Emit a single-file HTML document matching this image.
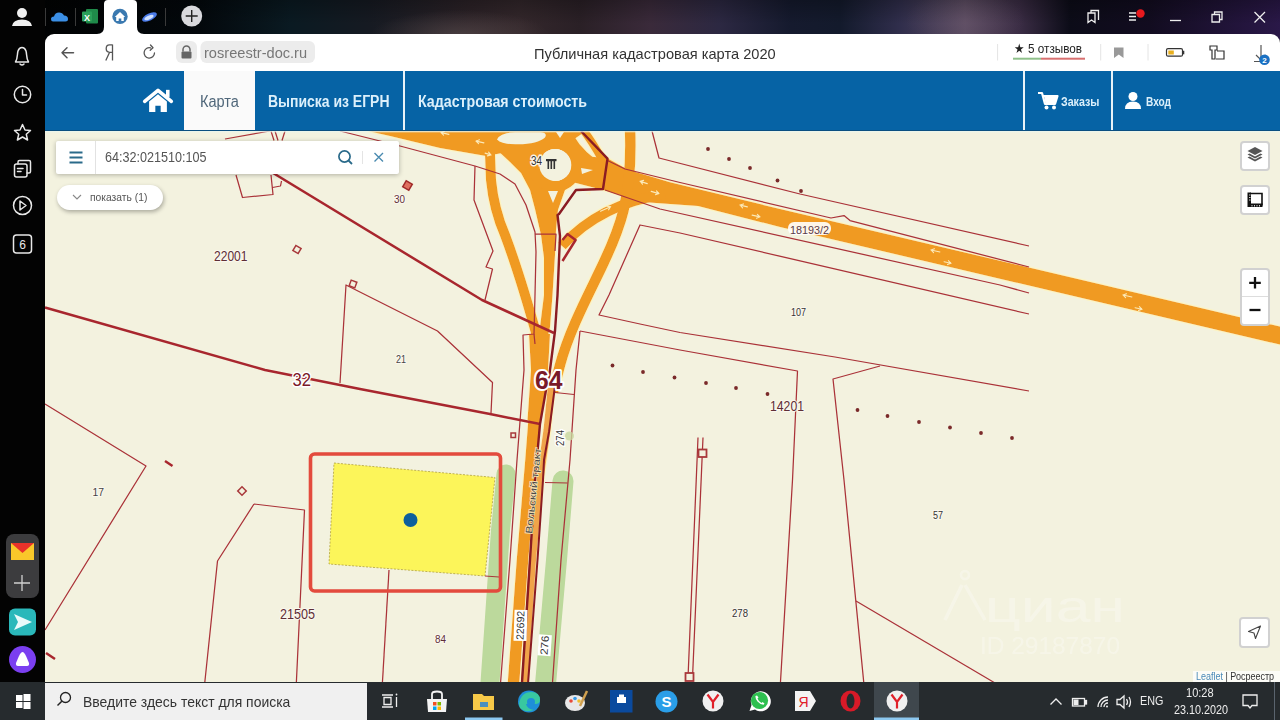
<!DOCTYPE html>
<html><head><meta charset="utf-8">
<style>
*{margin:0;padding:0;box-sizing:border-box}
html,body{width:1280px;height:720px;overflow:hidden;background:#000;font-family:"Liberation Sans",sans-serif}
.abs{position:absolute}
#top{left:0;top:0;width:1280px;height:40px;background:radial-gradient(ellipse 90px 26px at 460px 36px,rgba(110,95,95,0.45),rgba(0,0,0,0)),radial-gradient(ellipse 60px 30px at 965px 20px,rgba(120,100,120,0.25),rgba(0,0,0,0)),linear-gradient(180deg,rgba(0,0,0,0.25),rgba(0,0,0,0) 60%),linear-gradient(90deg,#000 0px,#03080c 200px,#0a1a22 290px,#161a22 370px,#2c2227 470px,#33272b 520px,#2a2026 580px,#3a2a3a 650px,#2c2842 720px,#151a2e 790px,#131a2c 840px,#302e4c 900px,#5a4a60 965px,#3a2c44 1020px,#0c0c18 1070px,#120c20 1150px,#2a1848 1280px)}
#side{left:0;top:0;width:45px;height:684px;background:#030303}
#toolbar{left:45px;top:34px;width:1235px;height:37px;background:#fff;border-radius:9px 9px 0 0}
#nav{left:45px;top:71px;width:1235px;height:60px;background:#0663a5}
#map{left:45px;top:131px;width:1235px;height:552px;background:#f3f2df;overflow:hidden}
#task{left:0;top:682px;width:1280px;height:38px;background:#262b2e}
.navt{position:absolute;top:0;height:60px;line-height:62px;color:#dcf0fb;font-size:17px;font-weight:bold;white-space:nowrap;transform-origin:0 50%}
</style></head>
<body>
<div id="top" class="abs"></div>
<div id="side" class="abs"></div>
<div id="toolbar" class="abs"></div>
<div id="nav" class="abs"></div>
<div id="map" class="abs"><svg class="abs" style="left:0;top:0" width="1235" height="552" viewBox="45 131 1235 552">
<defs>
<filter id="blur1" x="-5%" y="-5%" width="110%" height="110%"><feGaussianBlur stdDeviation="0.35"/></filter>
</defs>
<g filter="url(#blur1)">
<!-- green bands -->
<g stroke="#bcd99c" stroke-linecap="round" fill="none">
<path d="M506,474 L500.5,530 L489.5,690" stroke-width="19"/>
<path d="M563,481 L556.5,560 L545,690" stroke-width="21"/>
</g>
<!-- roads -->
<filter id="halo" x="-2%" y="-2%" width="104%" height="104%"><feMorphology in="SourceAlpha" operator="dilate" radius="1.3" result="d"/><feFlood flood-color="#fcf4c0"/><feComposite in2="d" operator="in" result="h"/><feMerge><feMergeNode in="h"/><feMergeNode in="SourceGraphic"/></feMerge></filter>
<g filter="url(#halo)">
<g fill="#f09a22">
<path d="M350,100 L600,100 L586,131 L570,142 L541,146 L497,154 L486,156 L440,148 L390,136 L350,127 Z"/>
<path d="M570,155 L607,158 L628,169.7 L670,182.3 L780,209 L1290,329 L1290,347 L780,227 L698,206 L663,203.4 L642,202 L607,191 L572,182 Z"/>
<path d="M529,334 L550,334 L547.5,380 L540,420 L527.5,420 L531,370 Z"/>
<path d="M497,150 L541,146 L555,187 L565,190 L558,210 L556,230 L555,255 L552.5,295 L550,327 L546,345 L536,345 L540,327 L544,295 L544,258 L541,235 L535,209 L530,190 L521,173 L510,162 Z"/>
</g>
<g stroke="#f09a22" fill="none" stroke-linecap="butt">
<circle cx="555" cy="165" r="21.5" stroke-width="11"/>
<path d="M581,127 Q592,141 603,161" stroke-width="8"/>
<path d="M565,127 Q570,146 592,163" stroke-width="10"/>
<path d="M489,128 L491,180 Q494,210 505,235 Q520,275 538,340" stroke-width="10"/>
<path d="M630,128 C633,200 618,232 604,262 C590,292 570,328 560,365 L553,392" stroke-width="10.5"/>
<path d="M562,246 Q600,204 665,194" stroke-width="10"/>
<path d="M540,330 L538,370 L531,460 L522.5,560 L513,690" stroke-width="11.5"/>
<path d="M552,380 L547,430 L540,480 L532.5,560 L524,690" stroke-width="7" stroke="#f0a448"/>
</g>
</g>
<g stroke="#fbe9b8" stroke-width="1.1" fill="none" stroke-linecap="round">
<path d="M640.2,181.4 L647.3,183.6 M642.5,184.2 L640.2,181.4 L643.6,180.4"/>
<path d="M651.2,191.4 L658.8,193.6 M656.5,190.9 L658.8,193.6 L655.4,194.7"/>
<path d="M740.1,205.1 L747.4,206.9 M742.6,207.8 L740.1,205.1 L743.5,203.9"/>
<path d="M752.1,215.1 L759.9,216.9 M757.4,214.3 L759.9,216.9 L756.5,218.2"/>
<path d="M931.1,250.0 L939.9,252.0 M933.6,252.6 L931.1,250.0 L934.5,248.7"/>
<path d="M944.1,261.7 L950.9,263.3 M948.4,260.7 L950.9,263.3 L947.5,264.6"/>
<path d="M1123.1,295.0 L1131.9,297.0 M1125.6,297.6 L1123.1,295.0 L1126.5,293.7"/>
<path d="M1135.1,307.7 L1141.9,309.3 M1139.4,306.7 L1141.9,309.3 L1138.5,310.6"/>
<path d="M441.1,132.6 L448.9,134.4 M443.6,135.2 L441.1,132.6 L444.5,131.3"/>
<path d="M476.1,141.1 L483.9,142.9 M478.6,143.7 L476.1,141.1 L479.5,139.8"/>
<path d="M485.1,153.1 L490.9,154.9 M488.6,152.1 L490.9,154.9 L487.4,155.9"/>
<path d="M600.5,211.3 L610.5,206.7 M607.0,206.2 L610.5,206.7 L608.6,209.8"/>
</g>
<!-- islands -->
<g fill="#f3f2df">
<circle cx="555.3" cy="165" r="16"/>
<path d="M581,168 L593,170 L582,174 Z"/>
<path d="M548,191 L558,191 L553,203 Z"/>
<path d="M556,132 L564,132 L560,138 Z"/>
<path d="M497,139.5 Q500,132.5 515,132.3 L540,132.3 Q548,132.5 545,137.5 Q538,144 518,144.3 Q502,144.8 497,139.5 Z"/>
</g>
<g fill="#fbf2c4" opacity="0.85">
<path d="M585,193.5 l6,-2 l-1,3 z"/>
</g>
<!-- thin red lines -->
<g stroke="#aa3238" stroke-width="1.25" fill="none" stroke-linejoin="round">
<path d="M225,139 L270,131"/>
<path d="M236,175 L242.5,197.5 L273,194.5 L271,175 M272.5,187.5 L280.5,186 L281.5,181"/>
<path d="M271,131 L274,140.5 M275,131 L278,140.5 M285,131 L282,140.5"/>
<path d="M45,404 L146,466 L45,630"/>
<path d="M254,504 L304.5,510 L296,690 M254,504 L217.5,561 L204,690"/>
<path d="M340,383 L346,285 L437.5,331 L492.5,382.5 L491,413"/>
<path d="M340,131 L400,146 L475,166 L500,174 L515,184 L526,205 L535,232 L536,252 L535,295 L534,334 L523,335 L524,370 L517,460 L510,560 L500,690"/>
<path d="M534,334 L535,344"/>
<path d="M475,166 L474,200 L493,251 L486,267 L492.5,269 L485,300"/>
<path d="M535,234 L556,234 L555,251"/>
<path d="M580,331 L576,370 L570,460 L561,560 L552,690"/>
<path d="M555,392.5 L574,394.5 M545,482.5 L567.5,483"/>
<path d="M580,331 L680,350 L797.5,371 L792.5,480 L780,690"/>
<path d="M1029,314 L680,233 L640,225 L609,295 L599,315 L640,324 L680,332.5 L835,357 L1029,391"/>
<path d="M652,131 L659,158 L800,194 L1029,246"/>
<path d="M607.5,160.5 L625,169 L680,182.5 L831,218 L844,215.6 L850,220.6 L1029,267"/>
<path d="M605,190 L660,209 L1000,285 L1029,293"/>
<path d="M880,366 L833,379 L844,480 L864.5,690"/>
<path d="M856,601 L995,683"/>
<path d="M698,437.5 L688,678 M703,437.5 L692.5,678"/>
<path d="M389,570 L382,690"/>
</g>
<!-- thick red lines -->
<g stroke="#a8282e" stroke-width="2.5" fill="none" stroke-linejoin="round">
<path d="M255,162 L482,300 L554,333"/>
<path d="M45,307.5 L265,370 L360,389 L490,414 L540,424"/>
<path d="M562.5,240 L567.5,234 L575.6,240 L562.5,261"/>
<path d="M165,461 L172.5,466"/>
<path d="M46,653 L55,659"/>
</g>
<g stroke="#8a1a22" stroke-width="2.4" fill="none" stroke-linejoin="round">
<path d="M581,131 L607.5,158.6 L603,189 L576,190 L559,214 L557.5,215 L560,236 L557.5,295 L555,331 L549,377.5 L546,390 L540,424 L535,480 L530,560 L521.5,690"/>
<path d="M555,386 L549,432 L544,460 L543,480 L537.5,560 L527.5,690" stroke-width="2"/>
</g>
<!-- squares / diamonds -->
<g stroke="#a8383a" stroke-width="1.5" fill="none">
<rect x="294" y="246.5" width="6" height="6" transform="rotate(30 297 249.5)"/>
<rect x="239" y="488" width="6" height="6" transform="rotate(45 242 491)"/>
<rect x="350" y="281" width="6" height="6" transform="rotate(20 353 284)"/>
<rect x="511" y="433" width="4.5" height="4.5"/>
<rect x="698.5" y="449.5" width="8" height="7.5" stroke-width="1.8" fill="#f3f2df"/>
<rect x="685.5" y="673" width="8" height="8" stroke-width="1.8" fill="#f3f2df"/>
</g>
<rect x="404" y="182" width="7" height="7" fill="#e07060" stroke="#a02a2a" stroke-width="1.5" transform="rotate(30 407.5 185.5)"/>
<!-- dots -->
<g fill="#7a2a2a">
<circle cx="708" cy="149" r="1.9"/><circle cx="729" cy="159" r="1.9"/><circle cx="750" cy="168" r="1.9"/><circle cx="777.5" cy="180.5" r="1.9"/><circle cx="801" cy="191" r="1.9"/>
<circle cx="612.5" cy="365.5" r="1.9"/><circle cx="643" cy="372" r="1.9"/><circle cx="674.5" cy="377.5" r="1.9"/><circle cx="706" cy="383" r="1.9"/><circle cx="736" cy="388" r="1.9"/><circle cx="767.5" cy="394" r="1.9"/>
<circle cx="857.5" cy="410" r="1.9"/><circle cx="887.5" cy="416" r="1.9"/><circle cx="919" cy="422" r="1.9"/><circle cx="950" cy="427.5" r="1.9"/><circle cx="981" cy="433" r="1.9"/><circle cx="1012" cy="438" r="1.9"/>
</g>
<circle cx="569.5" cy="436" r="4.5" fill="#c8d8a0" opacity="0.8"/>
<!-- selection -->
<path d="M334,463 L495,477.5 L485,576 L329,564 Z" fill="#fcf55a" stroke="#b0a040" stroke-width="0.8" stroke-dasharray="2 1.5"/>
<path d="M485,576 L499,577" stroke="#a8383a" stroke-width="1"/>
<rect x="310.5" y="454" width="190" height="137" rx="4" fill="none" stroke="#e34b3c" stroke-width="3.6"/>
<circle cx="410.5" cy="520" r="7" fill="#0b5e9c"/>
</g>
<g opacity="0.28" fill="#ffffff" font-family="Liberation Sans, sans-serif">
<circle cx="965" cy="575" r="4" fill="none" stroke="#fff" stroke-width="2.5"/>
<path d="M962,585 L945,620 M965,585 L985,620" stroke="#fff" stroke-width="3.5"/>
<text x="985" y="622" font-size="44" textLength="140" lengthAdjust="spacingAndGlyphs">циан</text>
<text x="980" y="654" font-size="24" textLength="140" lengthAdjust="spacingAndGlyphs">ID 29187870</text>
</g>
<!-- labels -->
<g font-family="Liberation Sans, sans-serif">
<g stroke="#fff" stroke-width="3" stroke-linejoin="round" paint-order="stroke" fill="#7a1a28">
<text x="292.5" y="386" font-size="19" textLength="18.5" lengthAdjust="spacingAndGlyphs">32</text>
<text x="535" y="389" font-size="25" font-weight="bold" textLength="27.5" lengthAdjust="spacingAndGlyphs" stroke-width="4">64</text>
</g>
<text x="531" y="165" font-size="12" fill="#333" stroke="#fbf6e8" stroke-width="3" paint-order="stroke" textLength="11" lengthAdjust="spacingAndGlyphs">34</text>
<g fill="#333"><rect x="546" y="159" width="10.5" height="2.2"/><rect x="547.5" y="161" width="1.6" height="8"/><rect x="550.5" y="161" width="1.6" height="8"/><rect x="553.5" y="161" width="1.6" height="8"/></g>
<rect x="788" y="222" width="43" height="13" rx="6" fill="#fff" opacity="0.9"/>
<text x="790" y="233.5" font-size="11.5" fill="#5a3a48" textLength="39" lengthAdjust="spacingAndGlyphs">18193/2</text>
<g transform="translate(563.5 446) rotate(-90)"><text x="0" y="0" font-size="10.5" fill="#333" textLength="16" lengthAdjust="spacingAndGlyphs" stroke="#fff" stroke-width="2.5" paint-order="stroke">274</text></g>
<g transform="translate(523.5 640) rotate(-88)"><rect x="-1" y="-10" width="31" height="13" fill="#fff"/><text x="0" y="0" font-size="10.5" fill="#333" textLength="29" lengthAdjust="spacingAndGlyphs">22692</text></g>
<g transform="translate(547.5 655) rotate(-86)"><rect x="-1" y="-10" width="21" height="13" fill="#fff"/><text x="0" y="0" font-size="10.5" fill="#333" textLength="19" lengthAdjust="spacingAndGlyphs">276</text></g>
<g transform="translate(532 534) rotate(-84)"><text x="0" y="0" font-size="9.5" fill="#4a4a4a" stroke="#f6e0b0" stroke-width="1.5" paint-order="stroke" textLength="86" lengthAdjust="spacingAndGlyphs">Вольский тракт</text></g>
</g>


<g font-family="Liberation Sans, sans-serif" fill="#5e2e36" stroke="#fbf8ee" stroke-width="2.2" paint-order="stroke" stroke-linejoin="round">
<text x="214" y="261" font-size="14" textLength="33.5" lengthAdjust="spacingAndGlyphs">22001</text>
<text x="394" y="202.5" font-size="10" textLength="11" lengthAdjust="spacingAndGlyphs">30</text>
<text x="396" y="362.5" font-size="10" fill="#444" textLength="10" lengthAdjust="spacingAndGlyphs">21</text>
<text x="791" y="315.5" font-size="11" fill="#333" textLength="15" lengthAdjust="spacingAndGlyphs">107</text>
<text x="770" y="411" font-size="15" textLength="34" lengthAdjust="spacingAndGlyphs">14201</text>
<text x="92.5" y="496" font-size="10" fill="#444" textLength="11.5" lengthAdjust="spacingAndGlyphs">17</text>
<text x="933" y="518.5" font-size="10.5" fill="#333" textLength="10" lengthAdjust="spacingAndGlyphs">57</text>
<text x="280" y="619" font-size="14.5" textLength="35" lengthAdjust="spacingAndGlyphs">21505</text>
<text x="435" y="642.5" font-size="10" textLength="11" lengthAdjust="spacingAndGlyphs">84</text>
<text x="732" y="617" font-size="11" fill="#333" textLength="16" lengthAdjust="spacingAndGlyphs">278</text>
</g>
</svg>
</div>
<div id="task" class="abs"></div>
<!-- sidebar icons -->
<svg class="abs" style="left:0;top:0" width="45" height="684">
<g fill="none" stroke="#e8e8e8" stroke-width="1.5" stroke-linejoin="round" stroke-linecap="round">
<path d="M15.5,62 C18,58 17,54 18,51 C19,48 21,47.5 22,47.5 C23,47.5 25,48 26,51 C27,54 26,58 28.5,62 Z M20,64 Q22,66 24,64"/>
<circle cx="22.5" cy="94.5" r="8.2"/>
<path d="M22.5,89.5 L22.5,95 L26.5,95"/>
<path d="M22.5,124.5 L25,130 L30.5,130.5 L26.3,134.3 L27.6,140 L22.5,137 L17.4,140 L18.7,134.3 L14.5,130.5 L20,130 Z"/>
<rect x="14.5" y="164" width="12.5" height="13" rx="2"/>
<path d="M18,164 L18,162 Q18,160.5 19.5,160.5 L29,160.5 Q30.5,160.5 30.5,162 L30.5,171.5 Q30.5,173 29,173 L27,173"/>
<path d="M17.5,168.5 L23,168.5 M17.5,171.5 L21,171.5"/>
<circle cx="22.5" cy="205.5" r="9"/>
<path d="M20,201 L26,205.5 L20,210 Z"/>
<rect x="13.5" y="235" width="18" height="18" rx="3"/>
</g>
<text x="22.5" y="248.5" font-family="Liberation Sans" font-size="12" fill="#e8e8e8" text-anchor="middle">6</text>
<g fill="#f0f0f0"><circle cx="22" cy="13" r="5"/><path d="M12,26 Q13,19.5 22,19.5 Q31,19.5 32,26 Z"/></g>
<rect x="6" y="534" width="33" height="64" rx="8" fill="#3c3c3e"/>
<path d="M11,543 L34,543 L34,560 L11,560 Z" fill="#f9c82a"/>
<path d="M11,543 L34,543 L22.5,553 Z" fill="#e8322a"/>
<path d="M22,575 L22,591 M14,583 L30,583" stroke="#d0d0d0" stroke-width="1.3"/>
<rect x="9" y="608.5" width="27" height="27" rx="6" fill="#2ab8ba"/>
<path d="M14,614 L32,622 L14,630 L18,622 Z" fill="#eafafa"/>
<circle cx="22.5" cy="659.5" r="13.5" fill="#7b3ff0"/>
<path d="M22.5,652 Q24,652 26,656 L29,663 Q29.5,666 27,666 L18,666 Q15.5,666 16,663 L19,656 Q21,652 22.5,652 Z" fill="#fff"/>
</svg>
<!-- tab strip -->
<svg class="abs" style="left:0;top:0" width="1280" height="34">
<g stroke="#3a3a3a" stroke-width="1"><path d="M45.5,8 V26 M75.5,8 V26 M165.5,8 V26"/></g>
<path d="M53,21.5 Q51,21.5 51,19 Q51,16.5 54,16.5 Q55,12.5 59,12.5 Q62.5,12.5 64,15.5 Q68,15.5 68,19 Q68,21.5 65.5,21.5 Z" fill="#3b8fe6"/>
<rect x="86" y="9" width="12" height="14.5" rx="1" fill="#1f8a4a"/><rect x="82" y="11.5" width="10" height="10" rx="1" fill="#2aa05a"/><text x="87" y="20.5" font-family="Liberation Sans" font-size="9" font-weight="bold" fill="#fff" text-anchor="middle">X</text>
<path d="M97,34 Q104,34 104,27 L104,4 Q104,0 108,0 L133,0 Q137,0 137,4 L137,27 Q137,34 144,34 Z" fill="#fff"/>
<circle cx="120" cy="16.4" r="7.7" fill="#3a79b0"/><path d="M114.8,17 L120,12 L125.2,17 L123.8,17 V21 H121.3 V18.5 H118.7 V21 H116.2 V17 Z" fill="#fff"/>
<ellipse cx="149.5" cy="17" rx="8" ry="3.5" transform="rotate(-25 149.5 17)" fill="#4a7ae8"/><ellipse cx="149" cy="17.5" rx="5" ry="1.8" transform="rotate(-25 149 17.5)" fill="#cfe0ff"/>
<circle cx="191.7" cy="16" r="10.5" fill="#d9d9dd"/><path d="M191.7,10 V22 M185.7,16 H197.7" stroke="#222" stroke-width="1.4"/>
<g stroke="#eee" stroke-width="1.3" fill="none">
<path d="M1088,13 L1095,13 L1095,22.5 L1091.5,20 L1088,22.5 Z M1091,13 L1091,10.5 L1098.5,10.5 L1098.5,20"/>
<path d="M1129,13 H1136 M1129,16.5 H1136 M1129,20 H1136"/>
<path d="M1170,20.5 H1181"/>
<path d="M1212,14.5 H1219.5 V22 H1212 Z M1214.5,14.5 V12 H1222 V19.5 H1219.5"/>
<path d="M1254.5,12 L1265,22.5 M1265,12 L1254.5,22.5"/>
</g>
<circle cx="1140.5" cy="13.5" r="4.2" fill="#e8191e"/>
</svg>
<!-- toolbar content -->
<div class="abs" style="left:0;top:34px;width:1280px;height:37px">
<svg class="abs" style="left:0;top:0" width="1280" height="37">
<g stroke="#555" stroke-width="1.5" fill="none" stroke-linecap="round" stroke-linejoin="round">
<path d="M62,18.8 H73.5 M67,13.8 L62,18.8 L67,23.8"/>
<path d="M154.5,19 A5.2,5.2 0 1 1 150.5,13.8 M150.5,11 L153,13.8 L150.2,16.3" stroke-width="1.3"/>
</g>
<rect x="176" y="7" width="21" height="22" rx="6" fill="#ececec"/>
<rect x="200.5" y="7" width="114.5" height="22" rx="6" fill="#ececec"/>
<path d="M183,17.5 V15.5 A3.5,3.5 0 0 1 190,15.5 V17.5" stroke="#666" stroke-width="1.5" fill="none"/><rect x="181.5" y="17.5" width="10" height="7" rx="1" fill="#666"/>
<path d="M997.6,10 V26.5 M1100.7,10 V26.5 M1148,10 V26.5" stroke="#e4e4e4" stroke-width="1"/>
<rect x="1013" y="23.7" width="28" height="2" fill="#8fc08a"/><rect x="1041" y="23.7" width="44" height="2" fill="#d87070"/>
<path d="M1114,13.5 H1123.5 V24 L1118.8,20.5 L1114,24 Z" fill="#999"/>
<rect x="1166.5" y="14.7" width="16" height="7.5" rx="1.5" fill="none" stroke="#333" stroke-width="1.2"/><rect x="1168.3" y="16.5" width="5.5" height="4" fill="#e8b020"/><rect x="1182.5" y="16.8" width="1.8" height="3.5" fill="#333"/>
<g stroke="#333" stroke-width="1.2" fill="none"><path d="M1210,12 H1217 V16 H1215 V25 H1212 V16 H1210 Z M1217,17 H1224 V25 H1216"/></g>
<path d="M1261,11 V24 M1256,21 L1261,26 L1266,21 M1254,27.5 H1262" stroke="#555" stroke-width="1.2" fill="none"/>
<circle cx="1264.5" cy="25.8" r="5.3" fill="#1a70c2"/><text x="1264.5" y="29" font-family="Liberation Sans" font-size="8" font-weight="bold" fill="#fff" text-anchor="middle">2</text>
</svg>
<svg class="abs" style="left:100px;top:8px" width="20" height="22"><path d="M12.5,2.5 V18.5 M12.5,2.8 H9.5 Q6.2,2.8 6.2,6.6 Q6.2,10.3 9.5,10.3 H12.5 M9.6,10.3 L5.8,18.5" stroke="#555" stroke-width="1.3" fill="none"/></svg>
<div class="abs" style="left:204px;top:10px;font-size:15px;color:#777;transform:scaleX(0.974);transform-origin:0 0">rosreestr-doc.ru</div>
<div class="abs" style="left:533.75px;top:10.5px;font-size:15px;color:#333;transform:scaleX(0.975);transform-origin:0 0;white-space:nowrap">Публичная кадастровая карта 2020</div>
<div class="abs" style="left:1014px;top:7px;font-size:13px;color:#222;white-space:nowrap;transform:scaleX(0.9);transform-origin:0 0">★ 5 отзывов</div>
</div>
<!-- nav content -->
<div class="abs" style="left:184px;top:71px;width:71px;height:60px;background:#fafafa"></div>
<div class="abs" style="left:402.5px;top:71px;width:2.5px;height:60px;background:#e8f2f8"></div>
<div class="abs" style="left:1022.5px;top:71px;width:2.5px;height:60px;background:#e8f2f8"></div>
<div class="abs" style="left:1110.5px;top:71px;width:2.5px;height:60px;background:#e8f2f8"></div>
<svg class="abs" style="left:141.5px;top:87px" width="32" height="27" viewBox="0 0 36 30">
<path d="M3,16 L18,3.5 L33,16" stroke="#fff" stroke-width="4" fill="none" stroke-linecap="round" stroke-linejoin="round"/>
<rect x="27" y="3" width="4" height="8" fill="#fff"/>
<path d="M8,16 L18,8 L28,16 V28 H21 V21 H15 V28 H8 Z" fill="#fff"/>
</svg>
<div class="navt" style="left:200px;top:71px;color:#50677a;font-weight:normal;font-size:16px;transform:scaleX(0.91)">Карта</div>
<div class="navt" style="left:268px;top:71px;font-size:16px;transform:scaleX(0.873)">Выписка из ЕГРН</div>
<div class="navt" style="left:418px;top:71px;font-size:16px;transform:scaleX(0.888)">Кадастровая стоимость</div>
<div class="navt" style="left:1060.5px;top:71px;font-size:13.5px;transform:scaleX(0.79)">Заказы</div>
<div class="navt" style="left:1145.5px;top:71px;font-size:13.5px;transform:scaleX(0.75)">Вход</div>
<svg class="abs" style="left:1036px;top:90px" width="24" height="22">
<path d="M2,3 H6 L9,14 H19 L21.5,6 H7" stroke="#fff" stroke-width="2.2" fill="none" stroke-linejoin="round"/>
<path d="M8,6 H21.5 L19,14 H9.5 Z" fill="#fff"/>
<circle cx="10.5" cy="17.5" r="2" fill="#fff"/><circle cx="18" cy="17.5" r="2" fill="#fff"/>
</svg>
<svg class="abs" style="left:1124px;top:91px" width="20" height="20">
<circle cx="9" cy="5.5" r="4.5" fill="#fff"/><path d="M1,18 Q1,10.5 9,10.5 Q17,10.5 17,18 Z" fill="#fff"/>
</svg>

<div class="abs" style="left:45px;top:130px;width:1235px;height:1px;background:#0a4f80"></div>
<div class="abs" style="left:45px;top:131px;width:1235px;height:2px;background:linear-gradient(180deg,#eaf6ee,rgba(243,242,223,0))"></div>
<!-- map controls -->
<div class="abs" style="left:56px;top:141px;width:343px;height:33px;background:#fff;box-shadow:0 1px 5px rgba(0,0,0,0.28);border-radius:2px"></div>
<div class="abs" style="left:95px;top:141px;width:1px;height:33px;background:#e2e2e2"></div>
<svg class="abs" style="left:56px;top:141px" width="343" height="33">
<path d="M13.5,11.5 H26.5 M13.5,16.5 H26.5 M13.5,21.5 H26.5" stroke="#2a6a8a" stroke-width="2.2"/>
<circle cx="288.5" cy="15.5" r="5.6" stroke="#2a6a8a" stroke-width="1.7" fill="none"/><path d="M292.5,19.5 L296,23" stroke="#2a6a8a" stroke-width="1.8"/>
<path d="M306.5,10 V23" stroke="#e4e4e4" stroke-width="1"/>
<path d="M318.5,12 L327,20.5 M327,12 L318.5,20.5" stroke="#4a8ab0" stroke-width="1.4"/>
</svg>
<div class="abs" style="left:104.5px;top:149px;font-size:14px;color:#555;white-space:nowrap;transform:scaleX(0.9);transform-origin:0 0">64:32:021510:105</div>
<div class="abs" style="left:57px;top:185px;width:106px;height:25px;background:#fff;border-radius:13px;box-shadow:1px 2px 4px rgba(0,0,0,0.3)"></div>
<svg class="abs" style="left:70px;top:192px" width="14" height="10"><path d="M3,3 L7,7 L11,3" stroke="#888" stroke-width="1.1" fill="none"/></svg>
<div class="abs" style="left:90px;top:191px;font-size:11px;color:#555;white-space:nowrap;transform:scaleX(0.935);transform-origin:0 0">показать (1)</div>
<div class="abs" style="left:1240px;top:141px;width:30px;height:30px;background:#fff;border:2px solid rgba(0,0,0,0.18);border-radius:4px"></div>
<svg class="abs" style="left:1240px;top:141px" width="30" height="30">
<path d="M15,20.5 L7.5,16.5 L9.5,15.5 L15,18.5 L20.5,15.5 L22.5,16.5 Z" fill="#555"/>
<path d="M15,17.5 L7.5,13.5 L9.5,12.5 L15,15.5 L20.5,12.5 L22.5,13.5 Z" fill="#555"/>
<path d="M15,14 L7.5,10 L15,6 L22.5,10 Z" fill="#555"/>
</svg>
<div class="abs" style="left:1240px;top:184.5px;width:30px;height:30px;background:#fff;border:2px solid rgba(0,0,0,0.18);border-radius:4px"></div>
<svg class="abs" style="left:1240px;top:184.5px" width="30" height="30">
<path d="M10,8.5 H22 V20.5" fill="none" stroke="#111" stroke-width="1.6"/>
<path d="M7.5,7.5 H11 V18.5 H22.5 V22 H7.5 Z" fill="#111"/>
<path d="M9,10 H10.5 M9,12.5 H10.5 M9,15 H10.5 M12,20 V21.5 M14.5,20 V21.5 M17,20 V21.5 M19.5,20 V21.5" stroke="#fff" stroke-width="0.8"/>
</svg>
<div class="abs" style="left:1240px;top:268px;width:30px;height:58px;background:#fff;border:2px solid rgba(0,0,0,0.18);border-radius:4px"></div>
<div class="abs" style="left:1242px;top:296px;width:26px;height:1px;background:#ddd"></div>
<svg class="abs" style="left:1240px;top:268px" width="30" height="58">
<path d="M15,9 V20.5 M9.2,14.8 H20.8" stroke="#111" stroke-width="2.3"/>
<path d="M9.5,42 H20.5" stroke="#111" stroke-width="2.3"/>
</svg>
<div class="abs" style="left:1239px;top:617px;width:31px;height:31px;background:#fff;border:2px solid rgba(0,0,0,0.18);border-radius:4px"></div>
<svg class="abs" style="left:1239px;top:617px" width="31" height="31">
<path d="M21.5,9 L9.5,14.5 L15,16 L16.5,21.5 Z" fill="none" stroke="#444" stroke-width="1.1" stroke-linejoin="round"/>
</svg>
<div class="abs" style="left:1193px;top:671px;width:87px;height:11px;background:rgba(255,255,255,0.75)"></div>
<div class="abs" style="left:1196px;top:670.5px;font-size:10px;color:#333;white-space:nowrap;transform:scaleX(0.9);transform-origin:0 0"><span style="color:#4a8ab8">Leaflet</span> | Росреестр</div>
<!-- taskbar -->
<div class="abs" style="left:0;top:682px;width:45px;height:38px;background:#262b2e"></div>
<div class="abs" style="left:45px;top:683px;width:322px;height:37px;background:#f0f0f0"></div>
<svg class="abs" style="left:0;top:682px" width="1280" height="38">
<g fill="#fff"><rect x="16" y="13" width="6.5" height="6" /><rect x="23.5" y="12" width="7" height="7"/><rect x="16" y="20" width="6.5" height="6"/><rect x="23.5" y="20" width="7" height="7"/></g>
<circle cx="65.5" cy="15.5" r="5" stroke="#222" stroke-width="1.3" fill="none"/><path d="M61.8,19.2 L57.5,23.5" stroke="#222" stroke-width="1.5"/>
<g stroke="#eee" stroke-width="1.3" fill="none"><path d="M382,13 H393 M382,25 H393 M384,15.5 H391 V22.5 H384 Z M396.5,15 V25"/></g><circle cx="396.5" cy="12.5" r="0.9" fill="#eee"/>
<path d="M427,17 H447 L446,30 H428 Z" fill="#f4f4f4"/><path d="M432,17 V12 Q432,9.5 437,9.5 Q442,9.5 442,12 V17" stroke="#f4f4f4" stroke-width="1.8" fill="none"/>
<rect x="433" y="20" width="3.5" height="3.5" fill="#f25022"/><rect x="437.5" y="20" width="3.5" height="3.5" fill="#7fba00"/><rect x="433" y="24.5" width="3.5" height="3.5" fill="#00a4ef"/><rect x="437.5" y="24.5" width="3.5" height="3.5" fill="#ffb900"/>
<path d="M473,12 H482 L484,14 H494 V28 H473 Z" fill="#f7c948"/><rect x="480" y="20" width="8" height="5" fill="#4a90c0"/>
<rect x="465" y="35.5" width="37.5" height="2.5" fill="#8cc8f0"/>
<circle cx="529" cy="19.5" r="11" fill="#1e8fd8"/><path d="M519,22 Q521,10 531,10 Q540,10 540,18 Q540,22 535,22 L526,22 Q527,27 534,28 Q525,31 520,26 Z" fill="#38c8a0"/><circle cx="531" cy="20" r="4" fill="#1e8fd8"/>
<ellipse cx="575" cy="21" rx="10" ry="8" fill="#e8e8e8"/><circle cx="571" cy="19" r="1.8" fill="#e84a3a"/><circle cx="575" cy="16.5" r="1.8" fill="#3a9ae8"/><circle cx="579" cy="19" r="1.8" fill="#f0c030"/><path d="M580,24 L587,9" stroke="#d0a050" stroke-width="2.5"/>
<rect x="610" y="8" width="22.5" height="22.5" fill="#0a4a9e"/><rect x="617" y="15" width="9" height="6" fill="#fff"/><rect x="619" y="12.5" width="5" height="3" fill="#fff"/>
<circle cx="666.5" cy="19.5" r="11" fill="#2a9ee8"/><text x="666.5" y="25" font-family="Liberation Sans" font-size="15" font-weight="bold" fill="#fff" text-anchor="middle">S</text>
<circle cx="713" cy="19" r="10.5" fill="#f0f0f0"/><path d="M707.5,12.5 L713,20 L718.5,12.5 M713,20 V26.5" stroke="#e0202a" stroke-width="2.2" fill="none"/>
<path d="M749.5,29 L751.5,23 A10,10 0 1 1 755,27.5 Z" fill="#fff"/><circle cx="759.5" cy="18.5" r="8.6" fill="#2ec050"/><path d="M755.5,14 Q755,16.5 757.5,19.5 Q760.5,22.8 763.5,22.8 L764.5,21.5 L762.5,20 L761.5,21 Q758.5,19.5 757.5,16.5 L758.5,15.5 L757,13.5 Z" fill="#fff"/>
<path d="M795,9 H810 L816,19 L810,29 H795 Z" fill="#f4f4f4"/><text x="803.5" y="25" font-family="Liberation Sans" font-size="14" fill="#e0202a" text-anchor="middle">Я</text>
<ellipse cx="850.5" cy="19" rx="10" ry="10.5" fill="#d81a28"/><ellipse cx="850.5" cy="19" rx="4" ry="7.5" fill="#262b2e"/>
<rect x="874" y="0" width="45" height="38" fill="#3f474d"/><rect x="874" y="35.5" width="45" height="2.5" fill="#8cc8f0"/>
<circle cx="897" cy="19" r="10.5" fill="#f0f0f0"/><path d="M891.5,12.5 L897,20 L902.5,12.5 M897,20 V26.5" stroke="#e0202a" stroke-width="2.2" fill="none"/>
<g stroke="#eee" stroke-width="1.3" fill="none">
<path d="M1050.5,22.5 L1056,17 L1061.5,22.5"/>
<rect x="1072.5" y="16.5" width="12" height="7.5"/><rect x="1085" y="18.5" width="1.5" height="3.5" fill="#eee"/>
<path d="M1098,25 A10,10 0 0 1 1108,15 M1101,25 A7,7 0 0 1 1108,18 M1104,25 A4,4 0 0 1 1108,21"/>
<path d="M1117,17.5 H1120 L1124,14 V26 L1120,22.5 H1117 Z M1126.5,17 Q1128.5,20 1126.5,23 M1129,15 Q1132,20 1129,25"/>
<path d="M1243,13 H1257 V23.5 H1252 L1250,26 L1248,23.5 H1243 Z"/>
</g>
<rect x="1073.5" y="17.5" width="5" height="5.5" fill="#eee"/>
<circle cx="1107" cy="24.5" r="1" fill="#eee"/>
<path d="M1274.5,0 V38" stroke="#5a646e" stroke-width="1"/>
</svg>
<div class="abs" style="left:83px;top:693px;font-size:15px;color:#333;white-space:nowrap;transform:scaleX(0.93);transform-origin:0 0">Введите здесь текст для поиска</div>
<div class="abs" style="left:1140px;top:694px;font-size:12px;color:#eee;white-space:nowrap;transform:scaleX(0.9);transform-origin:0 0">ENG</div>
<div class="abs" style="left:1186px;top:686px;font-size:12px;color:#eee;white-space:nowrap;transform:scaleX(0.92);transform-origin:0 0">10:28</div>
<div class="abs" style="left:1174px;top:702.5px;font-size:12px;color:#eee;white-space:nowrap;transform:scaleX(0.9);transform-origin:0 0">23.10.2020</div>

</body></html>
